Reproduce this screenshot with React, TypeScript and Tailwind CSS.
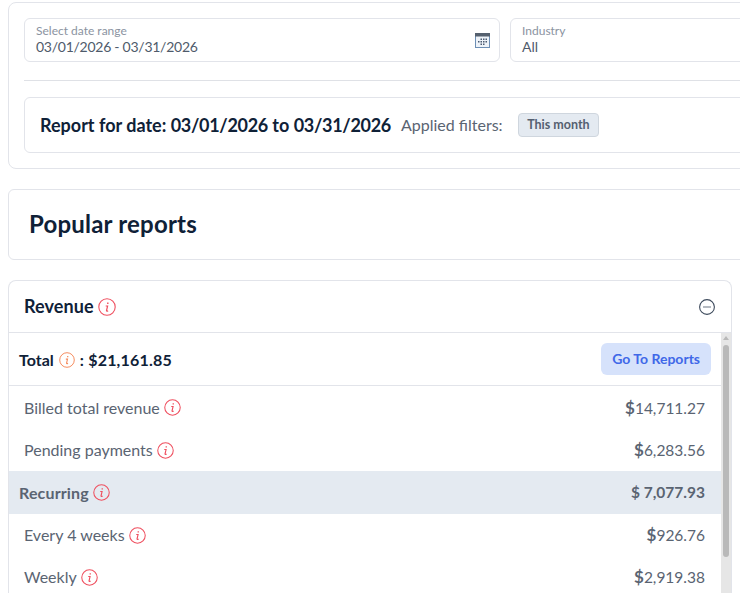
const InfoIcon = ({ size = 18, color = "#ef4f5f" }: { size?: number; color?: string }) => (
  <svg width={size} height={size} viewBox="0 0 18 18" fill="none" className="shrink-0">
    <circle cx="9" cy="9" r="8.2" stroke={color} strokeWidth="1.1" />
    <path d="M9.8 4.4v1.5" stroke={color} strokeWidth="1.4" />
    <path d="M7.7 8h1.9l-1.1 4.6c-.1.7.6.8 1.6.1" stroke={color} strokeWidth="1.2" fill="none" />
  </svg>
);

const CalendarIcon = () => (
  <svg width="15" height="15" viewBox="0 0 15 15" className="shrink-0">
    <rect x="0.5" y="0.5" width="14" height="14" fill="#eef3f9" stroke="#6d8fb5" />
    <rect x="0" y="0" width="15" height="3.5" fill="#55606e" />
    <g fill="#4a5a70">
      <rect x="5.5" y="5.5" width="1.5" height="1.5" />
      <rect x="8" y="5.5" width="1.5" height="1.5" />
      <rect x="10.5" y="5.5" width="1.5" height="1.5" />
      <rect x="3" y="8" width="1.5" height="1.5" />
      <rect x="5.5" y="8" width="1.5" height="1.5" />
      <rect x="8" y="8" width="1.5" height="1.5" />
      <rect x="10.5" y="8" width="1.5" height="1.5" />
      <rect x="5.5" y="10.5" width="1.5" height="1.5" />
      <rect x="8" y="10.5" width="1.5" height="1.5" />
    </g>
  </svg>
);

const Row = ({ label, value, tall }: { label: string; value: string; tall?: boolean }) => (
  <div
    className={
      tall
        ? "flex h-[43px] items-center justify-between pl-[15px] pr-4 text-[#5a6472]"
        : "flex h-[42px] items-center justify-between pl-[15px] pr-4 text-[#5a6472]"
    }
  >
    <div className="flex items-center gap-[4px] text-[16px]">
      {label}
      <InfoIcon size={17} />
    </div>
    <div className="text-[15.5px]">
      <span className="text-[17px] font-bold">$</span>
      {value}
    </div>
  </div>
);

export default function App() {
  return (
    <div
      className="h-[593px] w-[740px] overflow-hidden bg-white text-[#0f2137]"
      style={{ fontFamily: "Lato, sans-serif" }}
    >
      <div className="w-[1000px] pl-2 pt-[2px]">
        <div className="h-[167px] rounded-lg border border-[#e2e4ea] px-[15px] pt-[15px]">
          <div className="flex gap-[10px]">
            <div className="flex h-[44px] w-[476px] items-center justify-between rounded-md border border-[#e2e4ea] pl-[11px] pr-[9px]">
              <div>
                <div className="text-[12px] leading-[14px] text-[#8b93a1]">Select date range</div>
                <div className="text-[14px] leading-[18px] tracking-[-0.26px] text-[#4f5b6b]">
                  03/01/2026 - 03/31/2026
                </div>
              </div>
              <CalendarIcon />
            </div>
            <div className="flex h-[44px] flex-1 items-center rounded-md border border-[#e2e4ea] pl-[11px]">
              <div>
                <div className="text-[12px] leading-[14px] text-[#8b93a1]">Industry</div>
                <div className="text-[14px] leading-[18px] text-[#4f5b6b]">All</div>
              </div>
            </div>
          </div>
          <div className="mt-[18px] border-t border-[#dfe1e6]" />
          <div className="mt-4 flex h-[56px] items-center rounded-md border border-[#e2e4ea] pl-[15px]">
            <span className="text-[18px] font-bold">
              Report for date: <span className="tracking-[-0.3px]">03/01/2026</span> to{" "}
              <span className="tracking-[-0.3px]">03/31/2026</span>
            </span>
            <span className="ml-[10px] text-[16px] text-[#5a6472]">Applied filters:</span>
            <span className="ml-[15px] flex h-[24px] items-center rounded border border-[#cfd6de] bg-[#e4eaf1] px-[8.5px] text-[12.5px] font-bold text-[#556070]">
              This month
            </span>
          </div>
        </div>

        <div className="mt-[20px] flex h-[71px] items-center rounded-md border border-[#e2e4ea] pb-[1px] pl-5">
          <h2 className="text-[24px] font-bold tracking-[0.2px]">Popular reports</h2>
        </div>

        <div className="mt-[20px] w-[724px] rounded-t-lg border border-b-0 border-[#e2e4ea]">
          <div className="flex h-[52px] items-center justify-between border-b border-[#e2e4ea] pl-[15px] pr-4">
            <div className="flex items-center gap-[4px] text-[18px] font-bold tracking-[0.1px]">
              Revenue
              <InfoIcon />
            </div>
            <svg width="16" height="16" viewBox="0 0 16 16" fill="none">
              <circle cx="8" cy="8" r="7.4" stroke="#3d4a5c" strokeWidth="1.1" />
              <path d="M4 8h8" stroke="#a3a9b2" strokeWidth="1.6" />
            </svg>
          </div>
          <div className="flex h-[260px]">
            <div className="min-w-0 flex-1">
              <div className="flex h-[53px] items-center justify-between border-b border-[#e2e4ea] px-[10px]">
                <div className="mt-[2px] flex items-center text-[16px] font-bold">
                  Total
                  <span className="ml-[5px]">
                    <InfoIcon size={16} color="#f58a5c" />
                  </span>
                  <span className="ml-[5px] tracking-[0.2px]">: $21,161.85</span>
                </div>
                <button className="h-[32px] rounded-md bg-[#d6e2fb] px-[11px] pb-[1px] text-[14px] font-bold text-[#3f68e8]">
                  Go To Reports
                </button>
              </div>
              <Row tall label="Billed total revenue" value="14,711.27" />
              <Row label="Pending payments" value="6,283.56" />
              <div className="flex h-[43px] items-center justify-between bg-[#e4eaf1] pl-[10px] pr-4 font-bold text-[#5a6472]">
                <div className="flex items-center gap-[4px] text-[16px] tracking-[0.15px]">
                  Recurring
                  <InfoIcon size={17} />
                </div>
                <div className="text-[15.5px]">$ 7,077.93</div>
              </div>
              <Row label="Every 4 weeks" value="926.76" />
              <Row label="Weekly" value="2,919.38" />
            </div>
            <div className="relative w-[10px] bg-[#e6e6e6]">
              <div className="absolute left-[2px] top-[3px] h-0 w-0 border-x-[3px] border-b-[4px] border-x-transparent border-b-[#b9b9b9]" />
              <div className="absolute left-[2px] top-[12px] h-[212px] w-[6px] rounded-sm bg-[#b9b9b9]" />
            </div>
          </div>
        </div>
      </div>
    </div>
  );
}
